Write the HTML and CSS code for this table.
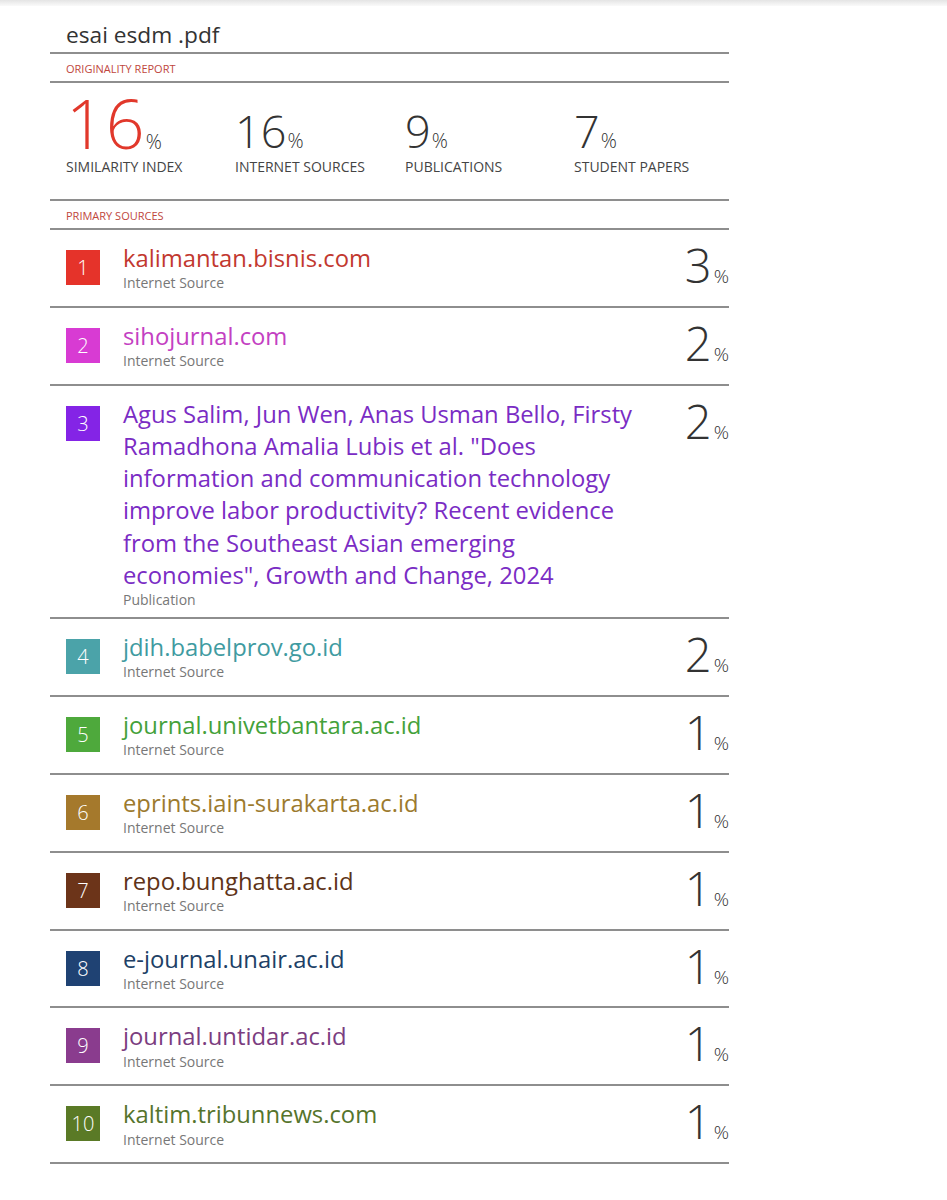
FILE: index.html
```html
<!DOCTYPE html>
<html lang="id">
<head>
<meta charset="utf-8">
<title>esai esdm .pdf</title>
<link rel="stylesheet" href="styles.css">
</head>
<body>
<div class="topshade"></div>
<div class="report">
  <h1 class="doc-title">esai esdm .pdf</h1>
  <div class="section-label">ORIGINALITY REPORT</div>
  <div class="stats">
    <div class="stat">
      <div class="stat-num main"><span class="big">16</span><span class="pct">%</span></div>
      <div class="stat-label">SIMILARITY INDEX</div>
    </div>
    <div class="stat">
      <div class="stat-num"><span class="small">16</span><span class="pct">%</span></div>
      <div class="stat-label">INTERNET SOURCES</div>
    </div>
    <div class="stat">
      <div class="stat-num"><span class="small">9</span><span class="pct">%</span></div>
      <div class="stat-label">PUBLICATIONS</div>
    </div>
    <div class="stat">
      <div class="stat-num"><span class="small">7</span><span class="pct">%</span></div>
      <div class="stat-label">STUDENT PAPERS</div>
    </div>
  </div>
  <div class="section-label">PRIMARY SOURCES</div>

  <div class="source c1">
    <div class="badge">1</div>
    <div class="info"><div class="name">kalimantan.bisnis.com</div><div class="type">Internet Source</div></div>
    <div class="percent">3<span class="pct">%</span></div>
  </div>
  <div class="source c2">
    <div class="badge">2</div>
    <div class="info"><div class="name">sihojurnal.com</div><div class="type">Internet Source</div></div>
    <div class="percent">2<span class="pct">%</span></div>
  </div>
  <div class="source c3">
    <div class="badge">3</div>
    <div class="info"><div class="name">Agus Salim, Jun Wen, Anas Usman Bello, Firsty Ramadhona Amalia Lubis et al. "Does information and communication technology improve labor productivity? Recent evidence from the Southeast Asian emerging economies", Growth and Change, 2024</div><div class="type">Publication</div></div>
    <div class="percent">2<span class="pct">%</span></div>
  </div>
  <div class="source c4">
    <div class="badge">4</div>
    <div class="info"><div class="name">jdih.babelprov.go.id</div><div class="type">Internet Source</div></div>
    <div class="percent">2<span class="pct">%</span></div>
  </div>
  <div class="source c5">
    <div class="badge">5</div>
    <div class="info"><div class="name">journal.univetbantara.ac.id</div><div class="type">Internet Source</div></div>
    <div class="percent">1<span class="pct">%</span></div>
  </div>
  <div class="source c6">
    <div class="badge">6</div>
    <div class="info"><div class="name">eprints.iain-surakarta.ac.id</div><div class="type">Internet Source</div></div>
    <div class="percent">1<span class="pct">%</span></div>
  </div>
  <div class="source c7">
    <div class="badge">7</div>
    <div class="info"><div class="name">repo.bunghatta.ac.id</div><div class="type">Internet Source</div></div>
    <div class="percent">1<span class="pct">%</span></div>
  </div>
  <div class="source c8">
    <div class="badge">8</div>
    <div class="info"><div class="name">e-journal.unair.ac.id</div><div class="type">Internet Source</div></div>
    <div class="percent">1<span class="pct">%</span></div>
  </div>
  <div class="source c9">
    <div class="badge">9</div>
    <div class="info"><div class="name">journal.untidar.ac.id</div><div class="type">Internet Source</div></div>
    <div class="percent">1<span class="pct">%</span></div>
  </div>
  <div class="source c10">
    <div class="badge">10</div>
    <div class="info"><div class="name">kaltim.tribunnews.com</div><div class="type">Internet Source</div></div>
    <div class="percent">1<span class="pct">%</span></div>
  </div>
</div>
</body>
</html>
```

FILE: styles.css
```css
* { box-sizing: border-box; }
html, body { margin: 0; padding: 0; background: #fff; }
body {
  font-family: "Open Sans", "Liberation Sans", sans-serif;
  color: #333;
}
.topshade {
  height: 6px;
  background: linear-gradient(#e4e4e4, #fafafa);
}
.report {
  margin-left: 50px;
  width: 679px;
}
.doc-title {
  margin: 0;
  padding: 14px 0 2px 16px;
  font-size: 22.7px;
  line-height: 30px;
  font-weight: 400;
  color: #333;
  border-bottom: 2px solid #8e8e8e;
}
.section-label {
  height: 29px;
  padding: 7px 0 0 16px;
  font-size: 11px;
  line-height: 15px;
  color: #c0473d;
  border-bottom: 2px solid #8e8e8e;
}
.stats {
  display: grid;
  grid-template-columns: 169px 170px 169px auto;
  padding: 6px 0 0 16px;
  height: 118px;
  border-bottom: 2px solid #8e8e8e;
}
.stat-num {
  height: 66px;
  font-size: 66px;
  line-height: 66px;
  font-weight: 300;
  color: #333;
  white-space: nowrap;
}
.stat-num .big { font-size: 68px; line-height: 1; letter-spacing: 1px; color: #e1382b; }
.stat-num .small { font-size: 45px; line-height: 1; }
.stat-num .pct { font-size: 20px; line-height: 1; color: #333; margin-left: 1px; }
.stat-num.main .pct { margin-left: 0; }
.stat-label {
  margin-top: 3px;
  font-size: 14px;
  line-height: 18px;
  color: #444;
  white-space: nowrap;
}
.source {
  display: flex;
  align-items: flex-start;
  min-height: 77.9px;
  padding: 12px 0 8px 16px;
  border-bottom: 2px solid #8e8e8e;
}
.badge {
  flex: 0 0 34px;
  height: 35px;
  margin-top: 8px;
  color: #fff;
  font-size: 20px;
  line-height: 36px;
  font-weight: 300;
  text-align: center;
}
.info {
  flex: 1;
  margin-left: 23px;
  padding-right: 40px;
}
.name {
  font-size: 23.8px;
  line-height: 32.2px;
}
.type {
  font-size: 14px;
  line-height: 18px;
  color: #777;
}
.percent {
  font-size: 47px;
  line-height: 47px;
  font-weight: 300;
  color: #333;
  white-space: nowrap;
  text-align: right;
}
.percent .pct { font-size: 19px; line-height: 1; margin-left: 2px; }

.c1 .badge { background: #e5332a; } .c1 .name { color: #c2382f; }
.c2 .badge { background: #d83bd3; } .c2 .name { color: #c340c2; }
.c3 .badge { background: #8424e6; } .c3 .name { color: #7a2cc4; }
.c4 .badge { background: #4ba3a9; } .c4 .name { color: #3f9ba1; }
.c5 .badge { background: #4ea93c; } .c5 .name { color: #44a13a; }
.c6 .badge { background: #a5792c; } .c6 .name { color: #9c7a2e; }
.c7 .badge { background: #6c3419; } .c7 .name { color: #5e3318; }
.c8 .badge { background: #1f4273; } .c8 .name { color: #203f66; }
.c9 .badge { background: #8a3c8e; } .c9 .name { color: #7b3d80; }
.c10 .badge { background: #5a7a26; } .c10 .name { color: #55742c; }
```
